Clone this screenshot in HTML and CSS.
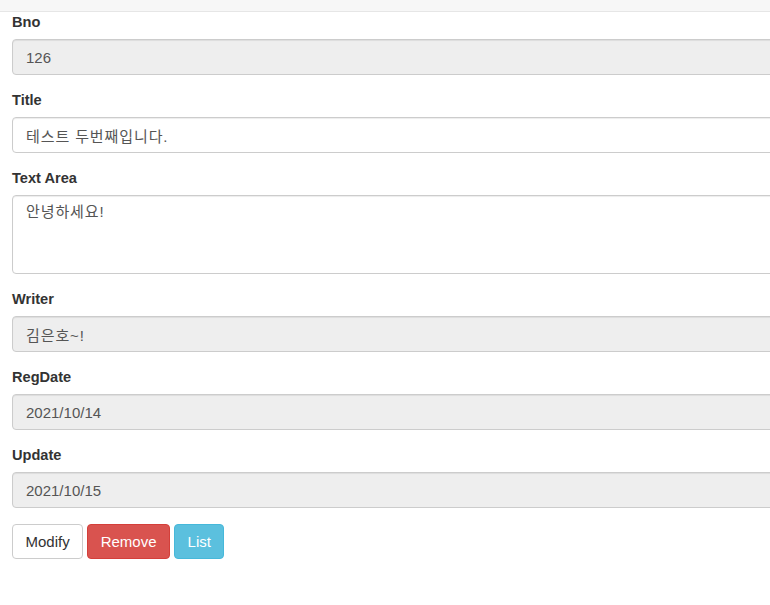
FILE: index.html
```html
<!DOCTYPE html>
<html lang="ko">
<head>
<meta charset="utf-8">
<title>Read</title>
<link rel="stylesheet" href="styles.css">
</head>
<body>
<div class="topbar"></div>
<form class="board-form">
  <div class="form-group">
    <label class="form-label">Bno</label>
    <input class="form-control" type="text" value="126" readonly>
  </div>
  <div class="form-group">
    <label class="form-label">Title</label>
    <input class="form-control editable ko" type="text" value="테스트 두번째입니다.">
  </div>
  <div class="form-group">
    <label class="form-label">Text Area</label>
    <textarea class="form-control editable textarea ko">안녕하세요!</textarea>
  </div>
  <div class="form-group">
    <label class="form-label">Writer</label>
    <input class="form-control ko" type="text" value="김은호~!" readonly>
  </div>
  <div class="form-group">
    <label class="form-label">RegDate</label>
    <input class="form-control" type="text" value="2021/10/14" readonly>
  </div>
  <div class="form-group">
    <label class="form-label">Update</label>
    <input class="form-control" type="text" value="2021/10/15" readonly>
  </div>
  <div class="actions">
    <button type="button" class="btn btn-default">Modify</button>
    <button type="button" class="btn btn-danger">Remove</button>
    <button type="button" class="btn btn-info">List</button>
  </div>
</form>
</body>
</html>
```

FILE: styles.css
```css
html, body {
  margin: 0;
  padding: 0;
  overflow: hidden;
  background: #fff;
}
body {
  font-family: "Liberation Sans", Arial, "Noto Sans CJK KR", sans-serif;
  font-size: 15px;
  line-height: 20px;
  color: #333;
}
.topbar {
  height: 11px;
  background: #f7f7f7;
  border-bottom: 1px solid #e6e6e6;
}
.board-form {
  width: 900px;
  padding: 0 12px;
}
.form-group {
  margin-bottom: 15px;
}
.form-label {
  display: block;
  font-weight: bold;
  font-size: 14.6px;
  line-height: 20px;
  margin-bottom: 7px;
  color: #333;
}
.form-control {
  display: block;
  box-sizing: border-box;
  width: 100%;
  height: 36px;
  padding: 6px 13px;
  margin: 0;
  font-family: "Liberation Sans", Arial, "Noto Sans CJK KR", sans-serif;
  font-size: 15px;
  line-height: 20px;
  color: #555;
  background: #eee;
  border: 1px solid #ccc;
  border-radius: 4px;
  box-shadow: inset 0 1px 1px rgba(0,0,0,.075);
  outline: none;
}
.form-control.editable {
  background: #fff;
}
.ko {
  letter-spacing: 0.9px;
}
.textarea {
  height: 79px;
  resize: none;
}
.actions {
  display: flex;
  gap: 4px;
  padding-top: 1px;
}
.btn {
  box-sizing: border-box;
  height: 35px;
  padding: 6px 12.5px;
  font-family: "Liberation Sans", Arial, "Noto Sans CJK KR", sans-serif;
  font-size: 15px;
  line-height: 20px;
  border: 1px solid transparent;
  border-radius: 4px;
  cursor: pointer;
}
.btn-default {
  color: #333;
  background: #fff;
  border-color: #ccc;
}
.btn-danger {
  color: #fff;
  background: #d9534f;
  border-color: #d43f3a;
}
.btn-info {
  color: #fff;
  background: #5bc0de;
  border-color: #46b8da;
}
```
